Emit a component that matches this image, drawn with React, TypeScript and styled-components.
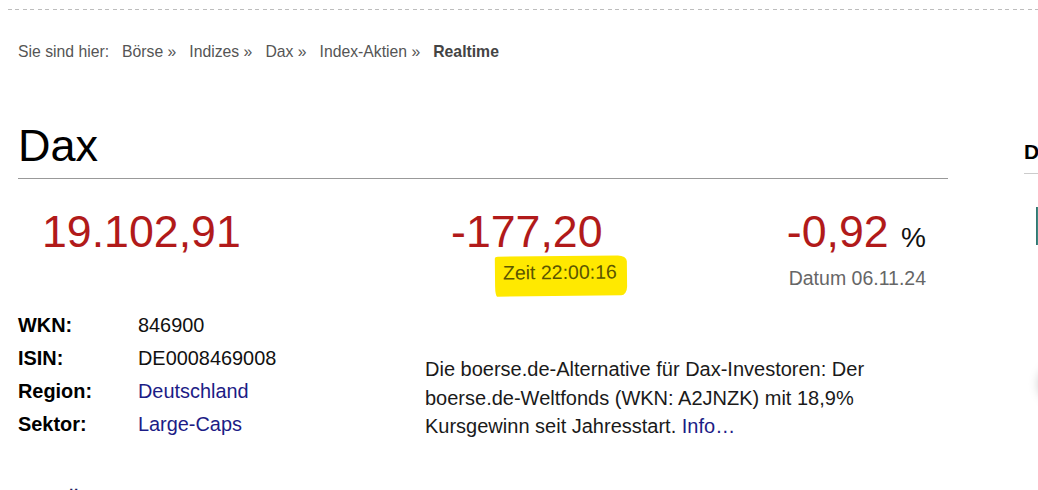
import styled, { createGlobalStyle } from "styled-components";

const GlobalStyle = createGlobalStyle`
  html, body {
    margin: 0;
    padding: 0;
    background: #fff;
    overflow: hidden;
  }
  body {
    font-family: "Liberation Sans", Arial, sans-serif;
    color: #222;
  }
`;

const Page = styled.div`
  padding-top: 9px;
  width: 1400px;
`;

const TopRule = styled.div`
  margin-left: 8px;
  height: 1px;
  background: repeating-linear-gradient(
    to right,
    #bdbdbd 0,
    #bdbdbd 4px,
    transparent 4px,
    transparent 7.5px
  );
`;

const Layout = styled.div`
  display: flex;
  align-items: flex-start;
  padding-left: 18px;
`;

const Main = styled.main`
  width: 930px;
  flex: none;
`;

const Breadcrumb = styled.nav`
  display: flex;
  gap: 13px;
  margin-top: 32px;
  font-size: 15.75px;
  line-height: 20px;
  color: #555;
  white-space: nowrap;
`;

const Crumb = styled.span<{ $current?: boolean }>`
  font-weight: ${(p) => (p.$current ? 700 : 400)};
  color: ${(p) => (p.$current ? "#444" : "#555")};
`;

const Title = styled.h1`
  margin: 58px 0 0;
  padding-bottom: 6px;
  border-bottom: 1px solid #999;
  font-size: 45px;
  line-height: 52px;
  font-weight: 400;
  color: #000;
`;

const QuoteRow = styled.div`
  display: grid;
  grid-template-columns: 310px 310px 310px;
  margin-top: 28px;
`;

const QuoteCell = styled.div<{ $align: "left" | "right"; $pad: number }>`
  display: flex;
  flex-direction: column;
  align-items: ${(p) => (p.$align === "right" ? "flex-end" : "flex-start")};
  padding-left: ${(p) => (p.$align === "left" ? p.$pad : 0)}px;
  padding-right: ${(p) => (p.$align === "right" ? p.$pad : 0)}px;
`;

const BigValue = styled.div`
  font-size: 44.7px;
  line-height: 50px;
  color: #b11a1a;
  white-space: nowrap;
`;

const Unit = styled.span`
  font-size: 28px;
  color: #111;
`;

const SubLine = styled.div<{ $highlight?: boolean; $indent?: number }>`
  margin-top: ${(p) => (p.$highlight ? -1 : 3)}px;
  margin-left: ${(p) => p.$indent ?? 0}px;
  font-size: 19.5px;
  line-height: 24px;
  color: ${(p) => (p.$highlight ? "#5b5600" : "#666")};
  white-space: nowrap;
  ${(p) =>
    p.$highlight &&
    `
    background: #ffe900;
    padding: 4px 10px 12px 8px;
    border-radius: 3px 9px 6px 2px / 2px 6px 9px 10px;
    transform: rotate(-0.6deg);
  `}
`;

const InfoRow = styled.div`
  display: flex;
  margin-top: 13px;
`;

const Facts = styled.dl`
  display: grid;
  grid-template-columns: 120px auto;
  width: 407px;
  margin: 0;
  font-size: 19.9px;
  line-height: 32.3px;
`;

const FactLabel = styled.dt`
  font-weight: 700;
  color: #000;
`;

const FactValue = styled.dd<{ $link?: boolean }>`
  margin: 0;
  color: ${(p) => (p.$link ? "#1c1c86" : "#111")};
`;

const Promo = styled.p`
  margin: 46px 0 0;
  width: 523px;
  font-size: 20px;
  line-height: 28.5px;
  color: #1a1a1a;
`;

const InlineLink = styled.a`
  color: #1c1c86;
  text-decoration: none;
`;

const SectionHeading = styled.h2`
  margin: 46px 0 0;
  font-size: 22px;
  line-height: 28px;
  font-weight: 700;
  color: #1c1c5e;
`;

const Sidebar = styled.aside`
  margin-left: 76px;
  width: 300px;
  flex: none;
`;

const SideTitle = styled.h3`
  margin: 129px 0 0;
  padding-bottom: 8px;
  border-bottom: 1px solid #ccc;
  font-size: 21px;
  line-height: 26px;
  font-weight: 700;
  color: #000;
  white-space: nowrap;
`;

const Teaser = styled.div`
  margin: 33px 0 0 12px;
  width: 220px;
  height: 38px;
  background: linear-gradient(90deg, #2b6f6a 0, #4d9d95 3px, #7fc1b8 40%, #a8d6cf 100%);
`;

const RoundBadge = styled.div`
  margin: 122px 0 0 16px;
  width: 34px;
  height: 34px;
  border-radius: 50%;
  background: #fff;
  box-shadow: 0 0 12px rgba(0, 0, 0, 0.28);
`;

export default function App() {
  return (
    <>
      <GlobalStyle />
      <Page>
        <TopRule />
        <Layout>
          <Main>
            <Breadcrumb>
              <Crumb>Sie sind hier:</Crumb>
              <Crumb>Börse »</Crumb>
              <Crumb>Indizes »</Crumb>
              <Crumb>Dax »</Crumb>
              <Crumb>Index-Aktien »</Crumb>
              <Crumb $current>Realtime</Crumb>
            </Breadcrumb>

            <Title>Dax</Title>

            <QuoteRow>
              <QuoteCell $align="left" $pad={24}>
                <BigValue>19.102,91</BigValue>
              </QuoteCell>
              <QuoteCell $align="left" $pad={123}>
                <BigValue>-177,20</BigValue>
                <SubLine $highlight $indent={44}>
                  Zeit 22:00:16
                </SubLine>
              </QuoteCell>
              <QuoteCell $align="right" $pad={22}>
                <BigValue>
                  -0,92 <Unit>%</Unit>
                </BigValue>
                <SubLine>Datum 06.11.24</SubLine>
              </QuoteCell>
            </QuoteRow>

            <InfoRow>
              <Facts>
                <FactLabel>WKN:</FactLabel>
                <FactValue>846900</FactValue>
                <FactLabel>ISIN:</FactLabel>
                <FactValue>DE0008469008</FactValue>
                <FactLabel>Region:</FactLabel>
                <FactValue $link>Deutschland</FactValue>
                <FactLabel>Sektor:</FactLabel>
                <FactValue $link>Large-Caps</FactValue>
              </Facts>
              <Promo>
                Die boerse.de-Alternative für Dax-Investoren: Der
                boerse.de-Weltfonds (WKN: A2JNZK) mit 18,9% Kursgewinn seit
                Jahresstart. <InlineLink href="#">Info…</InlineLink>
              </Promo>
            </InfoRow>

            <SectionHeading>Dax-Übersicht</SectionHeading>
          </Main>

          <Sidebar>
            <SideTitle>Dax Realtime</SideTitle>
            <Teaser />
            <RoundBadge />
          </Sidebar>
        </Layout>
      </Page>
    </>
  );
}
